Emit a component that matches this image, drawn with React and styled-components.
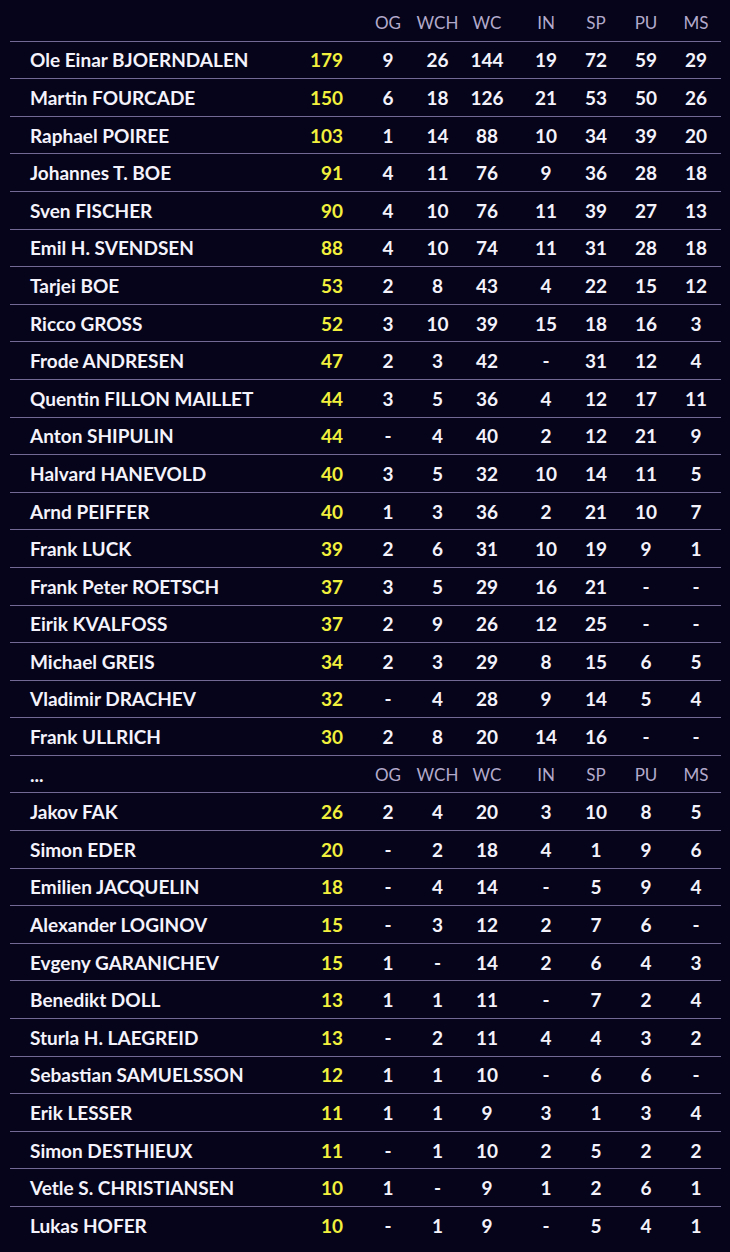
import React from 'react';
import styled, { createGlobalStyle } from 'styled-components';

const GlobalStyle = createGlobalStyle`
  html, body {
    margin: 0;
    padding: 0;
    background: #05041a;
  }
  body {
    font-family: Lato, "Open Sans", sans-serif;
    color: #f4f2fa;
  }
`;

const COLUMNS = ['OG', 'WCH', 'WC', 'IN', 'SP', 'PU', 'MS'];

const TOP = [
  ['Ole Einar BJOERNDALEN', 179, 9, 26, 144, 19, 72, 59, 29],
  ['Martin FOURCADE', 150, 6, 18, 126, 21, 53, 50, 26],
  ['Raphael POIREE', 103, 1, 14, 88, 10, 34, 39, 20],
  ['Johannes T. BOE', 91, 4, 11, 76, 9, 36, 28, 18],
  ['Sven FISCHER', 90, 4, 10, 76, 11, 39, 27, 13],
  ['Emil H. SVENDSEN', 88, 4, 10, 74, 11, 31, 28, 18],
  ['Tarjei BOE', 53, 2, 8, 43, 4, 22, 15, 12],
  ['Ricco GROSS', 52, 3, 10, 39, 15, 18, 16, 3],
  ['Frode ANDRESEN', 47, 2, 3, 42, '-', 31, 12, 4],
  ['Quentin FILLON MAILLET', 44, 3, 5, 36, 4, 12, 17, 11],
  ['Anton SHIPULIN', 44, '-', 4, 40, 2, 12, 21, 9],
  ['Halvard HANEVOLD', 40, 3, 5, 32, 10, 14, 11, 5],
  ['Arnd PEIFFER', 40, 1, 3, 36, 2, 21, 10, 7],
  ['Frank LUCK', 39, 2, 6, 31, 10, 19, 9, 1],
  ['Frank Peter ROETSCH', 37, 3, 5, 29, 16, 21, '-', '-'],
  ['Eirik KVALFOSS', 37, 2, 9, 26, 12, 25, '-', '-'],
  ['Michael GREIS', 34, 2, 3, 29, 8, 15, 6, 5],
  ['Vladimir DRACHEV', 32, '-', 4, 28, 9, 14, 5, 4],
  ['Frank ULLRICH', 30, 2, 8, 20, 14, 16, '-', '-'],
];

const REST = [
  ['Jakov FAK', 26, 2, 4, 20, 3, 10, 8, 5],
  ['Simon EDER', 20, '-', 2, 18, 4, 1, 9, 6],
  ['Emilien JACQUELIN', 18, '-', 4, 14, '-', 5, 9, 4],
  ['Alexander LOGINOV', 15, '-', 3, 12, 2, 7, 6, '-'],
  ['Evgeny GARANICHEV', 15, 1, '-', 14, 2, 6, 4, 3],
  ['Benedikt DOLL', 13, 1, 1, 11, '-', 7, 2, 4],
  ['Sturla H. LAEGREID', 13, '-', 2, 11, 4, 4, 3, 2],
  ['Sebastian SAMUELSSON', 12, 1, 1, 10, '-', 6, 6, '-'],
  ['Erik LESSER', 11, 1, 1, 9, 3, 1, 3, 4],
  ['Simon DESTHIEUX', 11, '-', 1, 10, 2, 5, 2, 2],
  ['Vetle S. CHRISTIANSEN', 10, 1, '-', 9, 1, 2, 6, 1],
  ['Lukas HOFER', 10, '-', 1, 9, '-', 5, 4, 1],
];

const Table = styled.div`
  margin: 4px 9px 0 10px;
  display: flex;
  flex-direction: column;
`;

const Row = styled.div`
  display: grid;
  grid-template-columns: 290px 63px 50px 49px 50px 68px 32px 68px 32px 1fr;
  align-items: center;
  height: 37.6px;
  box-sizing: border-box;
  border-bottom: ${(p) => (p.$last ? 'none' : '1px solid #726a94')};
`;

const Name = styled.div`
  padding-left: 20px;
  font-size: 19px;
  font-weight: 700;
  color: #f4f2fa;
  white-space: nowrap;
`;

const Score = styled.div`
  padding-right: 20px;
  text-align: right;
  font-size: 19px;
  font-weight: 700;
  color: #f2f03c;
`;

const Stat = styled.div`
  text-align: center;
  font-size: 19px;
  font-weight: 700;
  color: #f4f2fa;
`;

const HeadCell = styled.div`
  text-align: center;
  font-size: 17px;
  font-weight: 400;
  color: #b3aacb;
`;

const HeaderRow = ({ label }) => (
  <Row>
    <Name>{label}</Name>
    <div />
    {COLUMNS.map((c) => (
      <HeadCell key={c}>{c}</HeadCell>
    ))}
  </Row>
);

const AthleteRow = ({ data, last }) => {
  const [name, total, ...stats] = data;
  return (
    <Row $last={last}>
      <Name>{name}</Name>
      <Score>{total}</Score>
      {stats.map((s, i) => (
        <Stat key={i}>{s}</Stat>
      ))}
    </Row>
  );
};

export default function App() {
  return (
    <>
      <GlobalStyle />
      <Table>
        <HeaderRow label="" />
        {TOP.map((d) => (
          <AthleteRow key={d[0]} data={d} />
        ))}
        <HeaderRow label="..." />
        {REST.map((d, i) => (
          <AthleteRow key={d[0]} data={d} last={i === REST.length - 1} />
        ))}
      </Table>
    </>
  );
}
